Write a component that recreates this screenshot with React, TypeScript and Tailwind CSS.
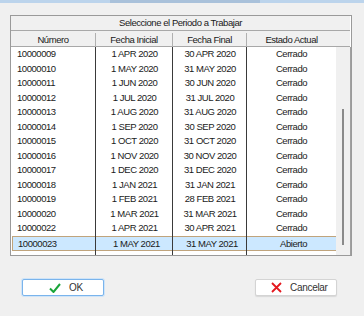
const rows = [
  ['10000009', '1 APR 2020', '30 APR 2020', 'Cerrado'],
  ['10000010', '1 MAY 2020', '31 MAY 2020', 'Cerrado'],
  ['10000011', '1 JUN 2020', '30 JUN 2020', 'Cerrado'],
  ['10000012', '1 JUL 2020', '31 JUL 2020', 'Cerrado'],
  ['10000013', '1 AUG 2020', '31 AUG 2020', 'Cerrado'],
  ['10000014', '1 SEP 2020', '30 SEP 2020', 'Cerrado'],
  ['10000015', '1 OCT 2020', '31 OCT 2020', 'Cerrado'],
  ['10000016', '1 NOV 2020', '30 NOV 2020', 'Cerrado'],
  ['10000017', '1 DEC 2020', '31 DEC 2020', 'Cerrado'],
  ['10000018', '1 JAN 2021', '31 JAN 2021', 'Cerrado'],
  ['10000019', '1 FEB 2021', '28 FEB 2021', 'Cerrado'],
  ['10000020', '1 MAR 2021', '31 MAR 2021', 'Cerrado'],
  ['10000022', '1 APR 2021', '30 APR 2021', 'Cerrado'],
  ['10000023', '1 MAY 2021', '31 MAY 2021', 'Abierto'],
];

const cols = 'grid grid-cols-[85px_77px_74px_89px]';

export default function App() {
  return (
    <div
      className="w-[364px] h-[316px] bg-[#f0f0f0] text-[9.5px] tracking-[-0.45px] text-[#1a1a1a] overflow-hidden"
      style={{ fontFamily: '"Liberation Sans", Arial, sans-serif' }}
    >
      {/* remains of the title bar */}
      <div className="h-[3px] flex">
        <div className="w-[110px] bg-[#bcd4ec]" />
        <div className="w-[150px] bg-[#a9c1da]" />
        <div className="flex-1 bg-[#bcd4ec]" />
      </div>

      {/* ---- grid ---- */}
      <div className="ml-[10px] mt-[12px] w-[342px] h-[241px] border border-[#9a9a9a] bg-white flex flex-col">
        {/* title row */}
        <div className="h-[15px] border-b border-[#a8a8a8] bg-[#f0f0f0] mr-[1px] flex items-center justify-center">
          Seleccione el Periodo a Trabajar
        </div>
        {/* column headers */}
        <div className={`${cols} h-[16px] border-b border-[#a8a8a8] bg-[#f0f0f0] mr-[1px]`}>
          <div className="flex items-center justify-center border-r border-[#b0b0b0] my-[2px]">Número</div>
          <div className="flex items-center justify-center border-r border-[#b0b0b0] my-[2px]">Fecha Inicial</div>
          <div className="flex items-center justify-center border-r border-[#b0b0b0] my-[2px]">Fecha Final</div>
          <div className="flex items-center justify-center">Estado Actual</div>
        </div>

        {/* data + scrollbar */}
        <div className="flex-1 flex min-h-0">
          <div className="relative w-[325px]">
            {rows.map((r, i) => {
              const sel = i === rows.length - 1;
              return (
                <div
                  key={r[0]}
                  className={
                    sel
                      ? `${cols} h-[15px] bg-[#cce8ff] border border-[#c0a47c] ml-[1px] -mr-[1px]`
                      : `${cols} h-[14.5px]`
                  }
                >
                  <div className={sel ? 'flex items-center pl-[5px]' : 'flex items-center pl-[6px]'}>{r[0]}</div>
                  <div className="flex items-center justify-center">{r[1]}</div>
                  <div className="flex items-center justify-center">{r[2]}</div>
                  <div className="flex items-center justify-center">{r[3]}</div>
                </div>
              );
            })}
            {/* column lines drawn over rows */}
            <div className="absolute left-[84px] top-0 bottom-0 w-px bg-[#3a3a3a]" />
            <div className="absolute left-[161px] top-0 bottom-0 w-px bg-[#3a3a3a]" />
            <div className="absolute left-[235px] top-0 bottom-0 w-px bg-[#3a3a3a]" />
          </div>
          {/* scrollbar */}
          <div className="flex-1 bg-[#f0f0f0] border-r border-[#a0a0a0] relative">
            <div className="absolute left-[6px] top-[62px] bottom-[10px] w-[2px] bg-[#8a8a8a]" />
          </div>
        </div>
      </div>

      {/* ---- buttons ---- */}
      <div className="flex justify-between mt-[23px] pl-[22px] pr-[27px]">
        <button className="w-[82px] h-[17px] rounded-[2px] border border-[#7ab4ec] shadow-[0_0_0_1px_#cfe4f8] bg-white flex items-center text-[10px] tracking-[-0.3px] text-[#333]">
          <svg width="12" height="10" viewBox="0 0 12 10" className="ml-[26px]">
            <path d="M1 5.5 L4.5 9 L11 1" fill="none" stroke="#1aa53a" strokeWidth="2" />
          </svg>
          <span className="ml-[8px]">OK</span>
        </button>
        <button className="w-[82px] h-[17px] rounded-[2px] border border-[#d4d4d4] shadow-[0_1px_1px_#d8d8d8] bg-white flex items-center text-[10px] tracking-[-0.3px] text-[#333]">
          <svg width="11" height="11" viewBox="0 0 11 11" className="ml-[15px]">
            <path d="M1 1 L10 10 M10 1 L1 10" fill="none" stroke="#e4181e" strokeWidth="1.8" />
          </svg>
          <span className="ml-[8px]">Cancelar</span>
        </button>
      </div>
    </div>
  );
}
